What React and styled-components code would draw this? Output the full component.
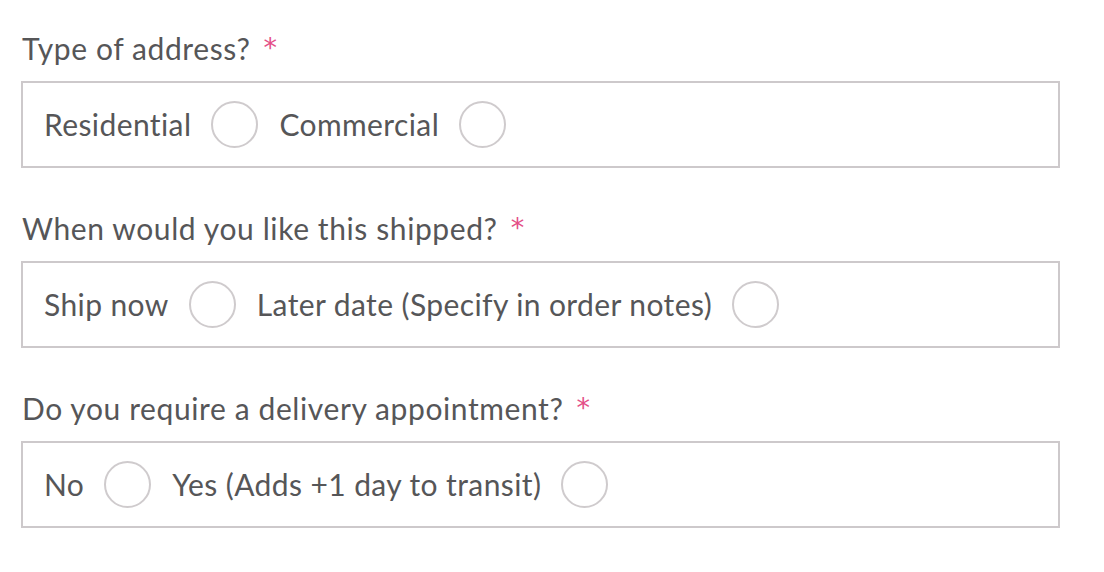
import React from "react";
import styled, { createGlobalStyle } from "styled-components";

const GlobalStyle = createGlobalStyle`
  body {
    margin: 0;
    background: #fff;
    font-family: "Lato", "Noto Sans", sans-serif;
  }
`;

const Form = styled.div`
  display: flex;
  flex-direction: column;
  gap: 40px;
  padding: 28px 0 0 21px;
`;

const Field = styled.div`
  display: flex;
  flex-direction: column;
  gap: 12px;
`;

const Label = styled.div`
  font-size: 30px;
  line-height: 41px;
  height: 41px;
  color: #565658;
  letter-spacing: 0.6px;
  padding-left: 1px;
`;

const Required = styled.span`
  color: #e44f87;
  font-family: "DejaVu Sans", sans-serif;
  font-size: 27px;
  line-height: 1;
  margin-left: 13px;
  vertical-align: 3px;
`;

const Box = styled.div`
  box-sizing: border-box;
  width: 1039px;
  height: 87px;
  border: 2px solid #cdc9cb;
  display: flex;
  align-items: center;
  padding-left: 21px;
  gap: 21px;
`;

const Option = styled.label`
  display: flex;
  align-items: center;
  gap: 20px;
  font-size: 30px;
  letter-spacing: 0.4px;
  color: #565658;
  padding-bottom: 2px;
`;

const Radio = styled.span`
  box-sizing: border-box;
  width: 47px;
  height: 47px;
  border-radius: 50%;
  border: 2px solid #cfcbcd;
  background: #fff;
  margin-top: 2px;
`;

const fields = [
  { label: "Type of address?", options: ["Residential", "Commercial"] },
  { label: "When would you like this shipped?", options: ["Ship now", "Later date (Specify in order notes)"] },
  { label: "Do you require a delivery appointment?", options: ["No", "Yes (Adds +1 day to transit)"] },
];

export default function App() {
  return (
    <>
      <GlobalStyle />
      <Form>
        {fields.map(field => (
          <Field key={field.label}>
            <Label>
              {field.label}
              <Required>*</Required>
            </Label>
            <Box>
              {field.options.map(opt => (
                <Option key={opt}>
                  {opt}
                  <Radio />
                </Option>
              ))}
            </Box>
          </Field>
        ))}
      </Form>
    </>
  );
}
